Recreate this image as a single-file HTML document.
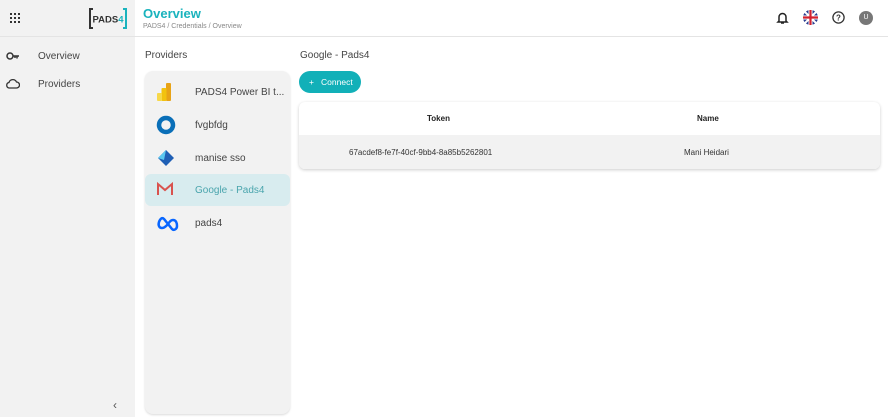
<!DOCTYPE html><html><head><style>
*{margin:0;padding:0;box-sizing:border-box}
body{width:888px;height:417px;overflow:hidden;background:#fff;font-family:"Liberation Sans",sans-serif;position:relative;color:#333}
.abs{position:absolute}
.side{left:0;top:0;width:135px;height:417px;background:#f2f2f2}
.hdr{left:135px;top:0;width:753px;height:37px;border-bottom:1px solid #e4e4e4;background:#fff}
.panel{left:145px;top:71px;width:145px;height:343px;background:#f2f2f2;border-radius:8px;box-shadow:0 1px 2px rgba(0,0,0,.15)}
.row{position:absolute;left:0;width:145px;height:32px;font-size:10px;color:#444}
.row span{position:absolute;left:50px;top:11px}
.row svg{position:absolute;left:11px;top:6px}
</style></head><body>
<div class="abs side"></div>
<div class="abs" style="left:0;top:36px;width:135px;height:1px;background:#e4e4e4"></div>
<div class="abs" style="left:10px;top:13px;width:10px;height:10px;display:grid;grid-template-columns:repeat(3,2px);gap:2px">
<i style="background:#333;width:2px;height:2px"></i><i style="background:#333;width:2px;height:2px"></i><i style="background:#333;width:2px;height:2px"></i><i style="background:#333;width:2px;height:2px"></i><i style="background:#333;width:2px;height:2px"></i><i style="background:#333;width:2px;height:2px"></i><i style="background:#333;width:2px;height:2px"></i><i style="background:#333;width:2px;height:2px"></i><i style="background:#333;width:2px;height:2px"></i></div>
<svg class="abs" style="left:88px;top:8px" width="40" height="21" viewBox="0 0 40 21"><path d="M5 1H2v19h3" fill="none" stroke="#333" stroke-width="2"/><path d="M35 1h3v19h-3" fill="none" stroke="#1ab3bd" stroke-width="2"/><text x="20" y="14.5" font-size="9.5" font-weight="bold" text-anchor="middle" fill="#333" font-family="Liberation Sans">PADS<tspan fill="#1ab3bd">4</tspan></text></svg>
<div class="abs hdr"></div>
<div class="abs" style="left:143px;top:6px;font-size:13px;font-weight:bold;color:#1ab3bd">Overview</div>
<div class="abs" style="left:143px;top:23px;font-size:7px;color:#888">PADS4 / Credentials / Overview</div>
<svg class="abs" style="left:776px;top:11px" width="13" height="14" viewBox="0 0 13 14"><path d="M3 10V6a3.5 3.5 0 0 1 7 0v4l1 1H2z M5 12h3" fill="none" stroke="#222" stroke-width="1.5"/></svg>
<svg class="abs" style="left:803px;top:10px" width="15" height="15" viewBox="0 0 15 15"><circle cx="7.5" cy="7.5" r="7.5" fill="#2a3c8f"/><path d="M2 2L13 13M13 2L2 13" stroke="#fff" stroke-width="2"/><path d="M7.5 0V15M0 7.5H15" stroke="#fff" stroke-width="4"/><path d="M7.5 0V15M0 7.5H15" stroke="#d2202f" stroke-width="2.2"/></svg>
<svg class="abs" style="left:832px;top:11px" width="13" height="13" viewBox="0 0 13 13"><circle cx="6.5" cy="6.5" r="5.6" fill="none" stroke="#333" stroke-width="1.3"/><text x="6.5" y="9.5" font-size="8" font-weight="bold" text-anchor="middle" fill="#333" font-family="Liberation Sans">?</text></svg>
<div class="abs" style="left:859px;top:11px;width:14px;height:14px;border-radius:50%;background:#777;color:#fff;font-size:7px;text-align:center;line-height:14px">U</div>
<svg class="abs" style="left:6px;top:51px" width="14" height="10" viewBox="0 0 14 10"><circle cx="4" cy="5" r="3" fill="none" stroke="#333" stroke-width="1.5"/><path d="M7 5h6M11 5v2.5M9 5v2" stroke="#333" stroke-width="1.5"/></svg>
<div class="abs" style="left:38px;top:51px;font-size:10px;color:#444">Overview</div>
<svg class="abs" style="left:5px;top:78px" width="15" height="11" viewBox="0 0 15 11"><path d="M4 10h7.5a3 3 0 0 0 0-6 4 4 0 0 0-7.5 0.5A2.8 2.8 0 0 0 4 10z" fill="none" stroke="#333" stroke-width="1.3"/></svg>
<div class="abs" style="left:38px;top:79px;font-size:10px;color:#444">Providers</div>
<div class="abs" style="left:113px;top:398px;font-size:12px;color:#555">‹</div>
<div class="abs" style="left:145px;top:50px;font-size:10px;color:#444">Providers</div>
<div class="abs panel">
<div class="row" style="top:5px"><svg width="16" height="20" viewBox="0 0 16 20"><rect x="10" y="1" width="5" height="18" rx="1" fill="#e8a317"/><rect x="5.5" y="6" width="5" height="13" rx="1" fill="#f2c20f"/><rect x="1" y="11" width="5" height="8" rx="1" fill="#f7d84a"/></svg><span>PADS4 Power BI t...</span></div>
<div class="row" style="top:38px"><svg width="20" height="20" viewBox="0 0 20 20"><circle cx="10" cy="10" r="7" fill="none" stroke="#0a6fb8" stroke-width="4.5"/></svg><span>fvgbfdg</span></div>
<div class="row" style="top:71px"><svg width="20" height="20" viewBox="0 0 20 20"><path d="M10 2L2 10l8 8 8-8z" fill="#1f5fb5"/><path d="M10 2L2 10l6 2 2-10z" fill="#5ac8f0"/></svg><span>manise sso</span></div>
<div class="row" style="top:103px;background:#d8ecef;border-radius:6px"><svg width="18" height="18" viewBox="0 0 18 18"><path d="M2 15V4l7 6 7-6v11" fill="none" stroke="#d9534f" stroke-width="2"/></svg><span style="color:#4aa5ad">Google - Pads4</span></div>
<div class="row" style="top:136px"><svg width="24" height="20" viewBox="0 0 24 20"><path d="M6 15c-3 0-4-3-3-6s3-5 5-3l4 5 4 5c2 2 5 0 5-3s-1-6-4-6-4 3-5 4-3 4-6 4z" fill="none" stroke="#0866ff" stroke-width="2.5"/></svg><span>pads4</span></div>
</div>
<div class="abs" style="left:300px;top:50px;font-size:10px;color:#444">Google - Pads4</div>
<div class="abs" style="left:299px;top:71px;width:62px;height:22px;border-radius:11px;background:#12b0b8;color:#fff;font-size:8.5px;line-height:22px;padding-left:10px">+&nbsp;&nbsp;&nbsp;Connect</div>
<div class="abs" style="left:299px;top:102px;width:581px;height:67px;border-radius:6px;box-shadow:0 1px 3px rgba(0,0,0,.2);background:#fff;overflow:hidden">
<div class="abs" style="left:0;top:33px;width:581px;height:34px;background:#f2f2f2"></div>
<div class="abs" style="left:128px;top:12px;font-size:8px;font-weight:bold;color:#222">Token</div>
<div class="abs" style="left:398px;top:12px;font-size:8px;font-weight:bold;color:#222">Name</div>
<div class="abs" style="left:50px;top:46px;font-size:8px;color:#333">67acdef8-fe7f-40cf-9bb4-8a85b5262801</div>
<div class="abs" style="left:385px;top:46px;font-size:8px;color:#333">Mani Heidari</div>
</div>
</body></html>
